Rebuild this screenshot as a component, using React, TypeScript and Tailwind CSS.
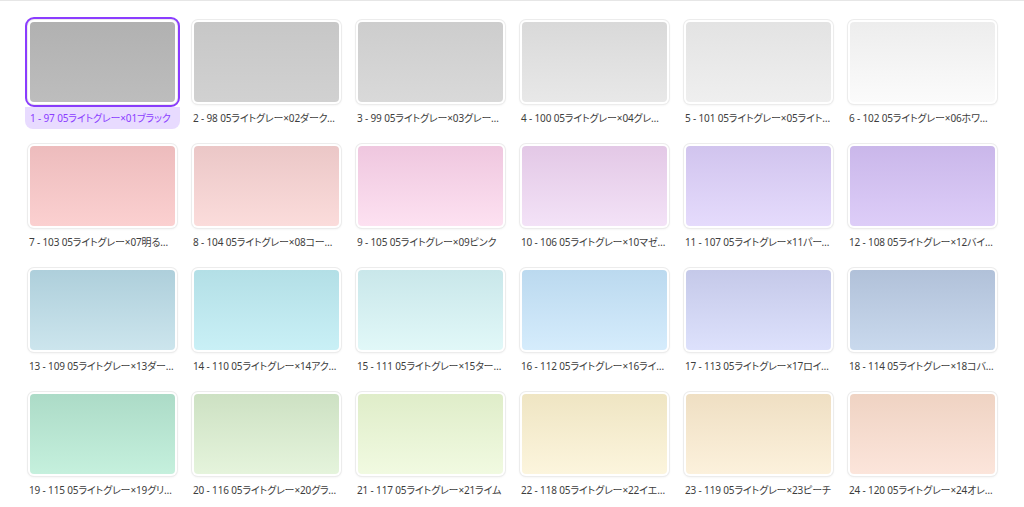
import React from 'react';

type Swatch = { label: string; from: string; to: string };

const swatches: Swatch[] = [
  { label: '1 - 97 05ライトグレー×01ブラック', from: '#b1b1b1', to: '#bdbdbd' },
  { label: '2 - 98 05ライトグレー×02ダークグレー', from: '#c7c7c7', to: '#d1d1d1' },
  { label: '3 - 99 05ライトグレー×03グレージュ', from: '#cdcdcd', to: '#d9d9d9' },
  { label: '4 - 100 05ライトグレー×04グレージュ', from: '#d9d9d9', to: '#e8e8e8' },
  { label: '5 - 101 05ライトグレー×05ライトグレー', from: '#e3e3e3', to: '#efefef' },
  { label: '6 - 102 05ライトグレー×06ホワイト', from: '#ededed', to: '#fbfbfb' },
  { label: '7 - 103 05ライトグレー×07明るいレッド', from: '#edbcbd', to: '#fbd0d0' },
  { label: '8 - 104 05ライトグレー×08コーラル', from: '#ebc7c7', to: '#fbdcdb' },
  { label: '9 - 105 05ライトグレー×09ピンク', from: '#efc7df', to: '#fde1f1' },
  { label: '10 - 106 05ライトグレー×10マゼンタ', from: '#e3c8e6', to: '#f3e2f7' },
  { label: '11 - 107 05ライトグレー×11パープル', from: '#d1c4ee', to: '#e5dbfc' },
  { label: '12 - 108 05ライトグレー×12バイオレット', from: '#cab7ea', to: '#ddcdf8' },
  { label: '13 - 109 05ライトグレー×13ダークシアン', from: '#aecfdb', to: '#cce5ed' },
  { label: '14 - 110 05ライトグレー×14アクアマリン', from: '#b3dfe6', to: '#c9f0f6' },
  { label: '15 - 111 05ライトグレー×15ターコイズ', from: '#c9e7ea', to: '#e1f8f8' },
  { label: '16 - 112 05ライトグレー×16ライトブルー', from: '#bbd9ef', to: '#d5ecfc' },
  { label: '17 - 113 05ライトグレー×17ロイヤルブルー', from: '#c5c9e9', to: '#dde1fc' },
  { label: '18 - 114 05ライトグレー×18コバルト', from: '#b1c1d9', to: '#c9d9ed' },
  { label: '19 - 115 05ライトグレー×19グリーン', from: '#acdbc7', to: '#c5f0dd' },
  { label: '20 - 116 05ライトグレー×20グラスグリーン', from: '#cde1c3', to: '#e5f4dc' },
  { label: '21 - 117 05ライトグレー×21ライム', from: '#dfedc9', to: '#f1fae1' },
  { label: '22 - 118 05ライトグレー×22イエロー', from: '#efe5c3', to: '#fcf5dd' },
  { label: '23 - 119 05ライトグレー×23ピーチ', from: '#efdfc3', to: '#fcf1dc' },
  { label: '24 - 120 05ライトグレー×24オレンジ', from: '#efd3c3', to: '#fce5db' },
];

function Cell({ s, selected }: { s: Swatch; selected: boolean }) {
  return (
    <div className="w-[155px]">
      <div
        className={
          selected
            ? 'rounded-[9px] border-[3px] border-[#8b3dff]'
            : 'rounded-[9px] border-[3px] border-transparent'
        }
      >
        <div className="rounded-[6px] bg-white p-[2px] shadow-[0_0_0_1px_#ececec,0_1px_3px_rgba(0,0,0,0.08)]">
          <div
            className="h-[80px] rounded-[4px]"
            style={{ backgroundImage: `linear-gradient(to bottom, ${s.from}, ${s.to})` }}
          />
        </div>
      </div>
      <div
        className={
          selected
            ? 'h-[22px] rounded-b-[8px] bg-[#e8dbff] px-[5px] text-[10px] leading-[22px] tracking-[-0.15px] text-[#8b3dff] truncate'
            : 'h-[22px] px-[4px] text-[10px] leading-[22px] tracking-[-0.15px] text-[#3d3d3d] truncate'
        }
      >
        {s.label}
      </div>
    </div>
  );
}

export default function App() {
  return (
    <div className="h-[507px] w-[1024px] overflow-hidden border-t border-[#e6e6e6] bg-white font-['Noto_Sans','Noto_Sans_CJK_JP',sans-serif] [font-feature-settings:'palt']">
      <div className="grid grid-cols-[repeat(6,155px)] gap-x-[9px] gap-y-[12px] pl-[25px] pt-[16px]">
        {swatches.map((s, i) => (
          <Cell key={i} s={s} selected={i === 0} />
        ))}
      </div>
    </div>
  );
}
